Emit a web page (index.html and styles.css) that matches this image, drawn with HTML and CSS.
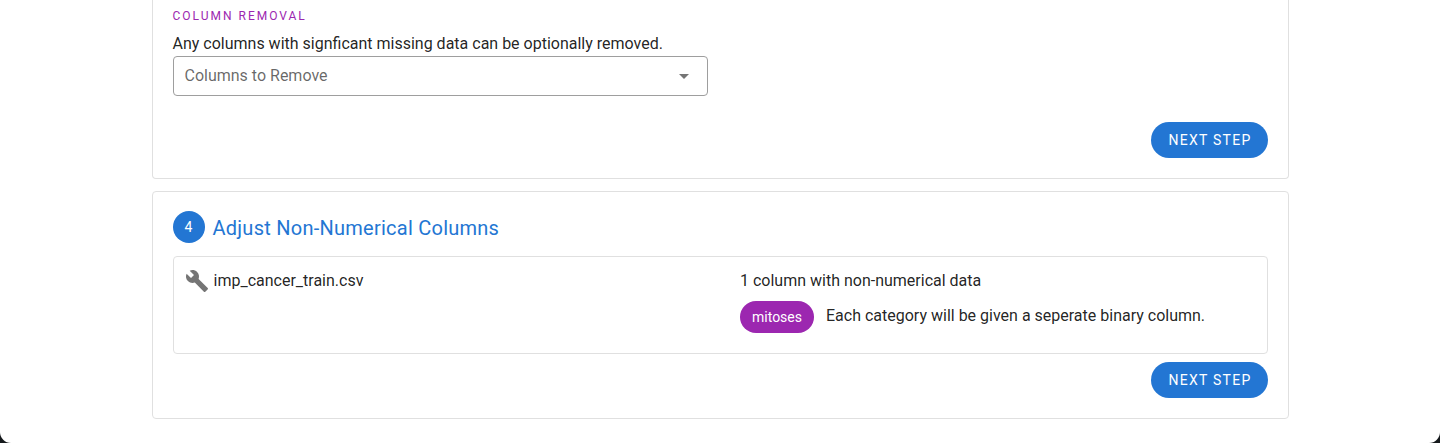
FILE: index.html
```html
<!DOCTYPE html>
<html lang="en">
<head>
<meta charset="utf-8">
<title>Data preparation</title>
<link rel="stylesheet" href="styles.css">
</head>
<body>
<main class="page">
  <section class="card card-removal">
    <div class="overline">Column Removal</div>
    <p class="hint">Any columns with signficant missing data can be optionally removed.</p>
    <div class="select" role="combobox">
      <span class="select-label">Columns to Remove</span>
      <svg class="icon" viewBox="0 0 24 24"><path d="M7,10L12,15L17,10H7Z"/></svg>
    </div>
    <div class="actions"><button class="btn">Next Step</button></div>
  </section>
  <section class="card card-adjust">
    <header class="step">
      <span class="step-number">4</span>
      <h2 class="step-title">Adjust Non-Numerical Columns</h2>
    </header>
    <div class="panel">
      <div class="file">
        <svg class="icon" viewBox="0 0 24 24"><path d="M22.7,19L13.6,9.9C14.5,7.6 14,4.9 12.1,3C10.1,1 7.1,0.6 4.7,1.7L9,6L6,9L1.6,4.7C0.4,7.1 0.9,10.1 2.9,12.1C4.8,14 7.5,14.5 9.8,13.6L18.9,22.7C19.3,23.1 19.9,23.1 20.3,22.7L22.6,20.4C23.1,20 23.1,19.3 22.7,19Z"/></svg>
        <span>imp_cancer_train.csv</span>
      </div>
      <div class="details">
        <div class="summary">1 column with non-numerical data</div>
        <div class="category">
          <span class="chip">mitoses</span>
          <span class="category-text">Each category will be given a seperate binary column.</span>
        </div>
      </div>
    </div>
    <div class="actions"><button class="btn">Next Step</button></div>
  </section>
</main>
</body>
</html>
```
FILE: styles.css
```css
* { box-sizing: border-box; }

html { background: #15191c; }

body {
  margin: 0;
  font: 16px/24px Roboto, sans-serif;
  color: rgba(0, 0, 0, 0.87);
}

.page {
  height: 443px;
  overflow: hidden;
  padding: 0 151px 0 152px;
  background: #fff;
  border-radius: 0 0 11px 11px;
}

.card {
  border: 1px solid #e0e0e0;
  border-radius: 4px;
  padding: 0 20px 0 19.5px;
}

.card-removal {
  height: 179px;
  border-top: 0;
  border-radius: 0 0 4px 4px;
}

.card-adjust {
  height: 228px;
  margin-top: 12px;
  padding-top: 19px;
}

.overline {
  height: 32px;
  line-height: 32px;
  font-size: 12px;
  letter-spacing: 2px;
  text-transform: uppercase;
  color: #9c27b0;
}

.hint { margin: 0; }

.select {
  display: flex;
  align-items: center;
  justify-content: space-between;
  width: 535.5px;
  height: 40px;
  padding: 0 11px;
  border: 1px solid #9e9e9e;
  border-radius: 4px;
  color: rgba(0, 0, 0, 0.6);
}

.icon {
  width: 24px;
  height: 24px;
  flex: none;
  fill: #757575;
}

.actions {
  display: flex;
  justify-content: flex-end;
  margin-top: 8px;
}

.card-removal .actions { margin-top: 26px; }

.btn {
  width: 117px;
  height: 36px;
  padding: 0 0 0 1px;
  border: 0;
  border-radius: 18px;
  background: #2376d3;
  color: #fff;
  font: 14px/36px Roboto, sans-serif;
  letter-spacing: 1.25px;
  text-transform: uppercase;
}

.step {
  display: flex;
  align-items: center;
  gap: 8px;
  height: 32px;
}

.step-number {
  width: 32px;
  height: 32px;
  border-radius: 50%;
  background: #2376d3;
  color: #fff;
  font-size: 14px;
  line-height: 32px;
  text-align: center;
}

.step-title {
  margin: 2px 0 0;
  font-size: 20px;
  font-weight: 400;
  line-height: 32px;
  letter-spacing: 0.25px;
  color: #2376d3;
}

.panel {
  display: grid;
  grid-template-columns: 555px 1fr;
  height: 98px;
  margin-top: 13px;
  padding: 12px 12px 12px 11.5px;
  border: 1px solid #e0e0e0;
  border-radius: 4px;
}

.file {
  display: flex;
  align-items: flex-start;
  gap: 4.5px;
}

.category {
  display: flex;
  gap: 12px;
  margin-top: 8px;
}

.category-text { line-height: 30px; }

.chip {
  width: 74px;
  height: 32px;
  border-radius: 16px;
  background: #9c27b0;
  color: #fff;
  font-size: 14px;
  line-height: 32px;
  text-align: center;
}
```
